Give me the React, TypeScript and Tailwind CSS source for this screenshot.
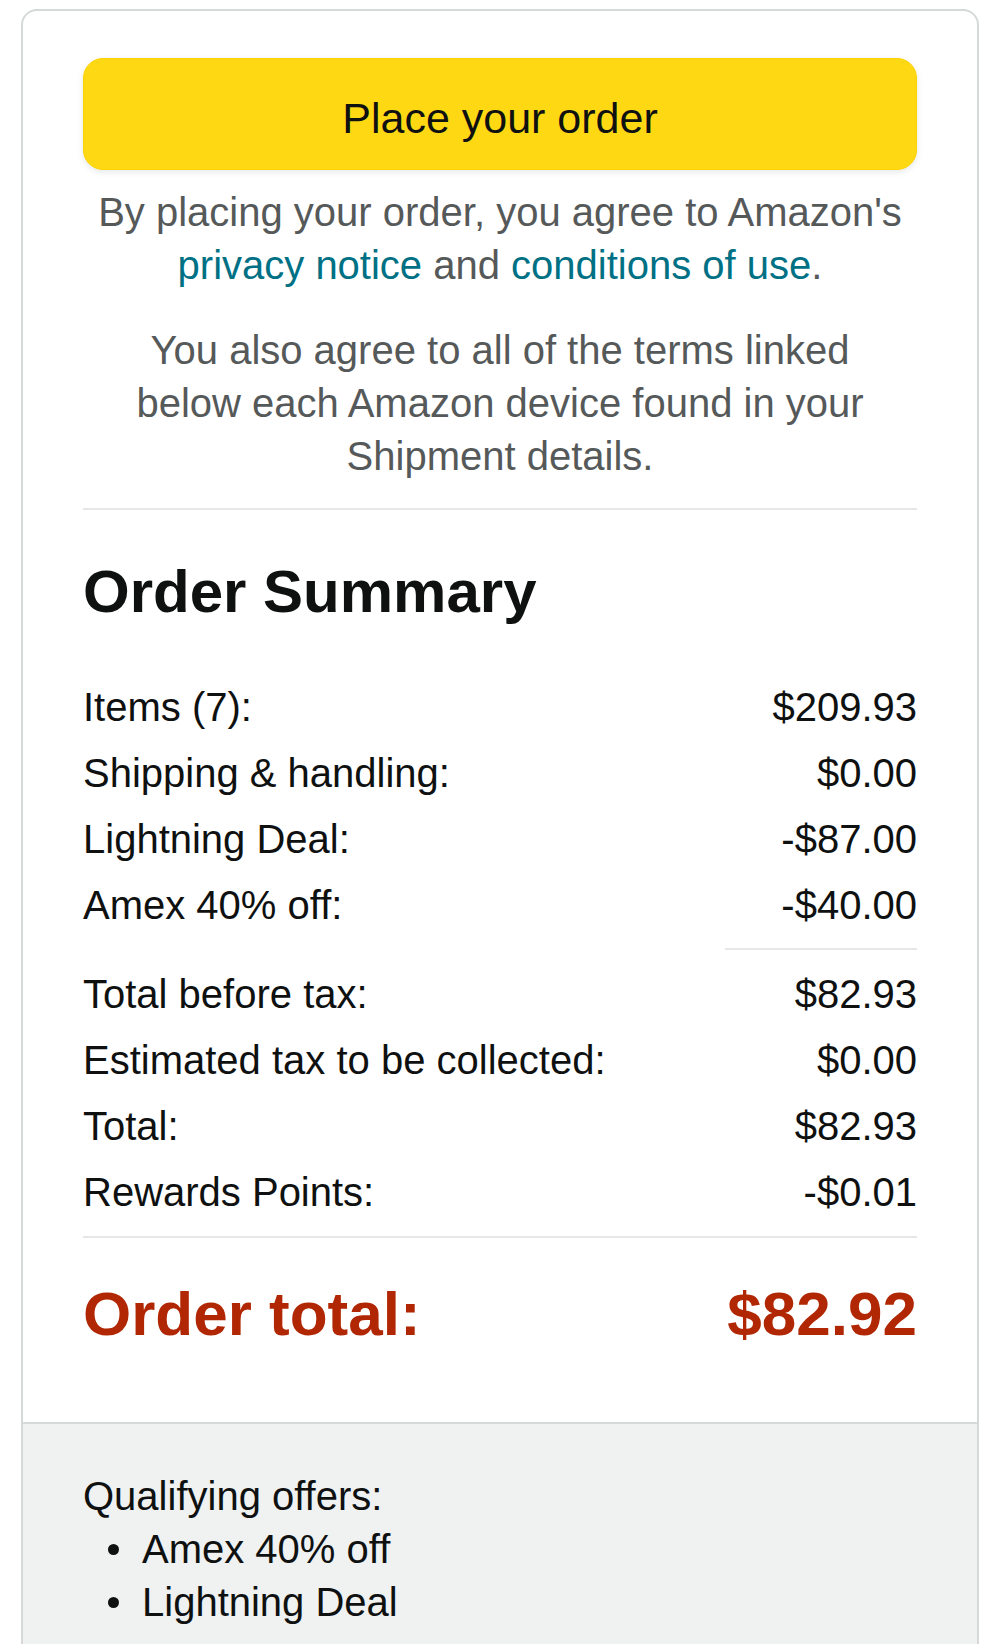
import React from "react";

const rowsA: [string, string][] = [
  ["Items (7):", "$209.93"],
  ["Shipping & handling:", "$0.00"],
  ["Lightning Deal:", "-$87.00"],
  ["Amex 40% off:", "-$40.00"],
];

const rowsB: [string, string][] = [
  ["Total before tax:", "$82.93"],
  ["Estimated tax to be collected:", "$0.00"],
  ["Total:", "$82.93"],
  ["Rewards Points:", "-$0.01"],
];

function Row({ label, value }: { label: string; value: string }) {
  return (
    <div className="flex h-[66px] items-center justify-between text-[40px] leading-none text-[#0F1111]">
      <span>{label}</span>
      <span>{value}</span>
    </div>
  );
}

export default function App() {
  return (
    <div className="h-[1644px] overflow-hidden bg-white font-['Liberation_Sans',Arial,sans-serif]">
      <div className="px-[21px] pt-[9px]">
        <div className="overflow-hidden rounded-[16px] border-2 border-[#D5D9D9]">
          <div className="px-[60px] pt-[47px] pb-[72px]">
            <button className="flex h-[112px] w-full items-center justify-center rounded-[20px] border border-[#FCD200] bg-[#FFD814] pt-[8px] text-[43px] leading-none text-[#0F1111] shadow-[0_2px_6px_0_rgba(213,217,217,0.6)]">
              Place your order
            </button>
            <p className="mt-[16px] text-center text-[40px] leading-[53px] text-[#565959]">
              By placing your order, you agree to Amazon's
              <br />
              <span className="text-[#007185]">privacy notice</span> and{" "}
              <span className="text-[#007185]">conditions of use</span>.
            </p>
            <p className="mt-[32px] text-center text-[40px] leading-[53px] text-[#565959]">
              You also agree to all of the terms linked
              <br />
              below each Amazon device found in your
              <br />
              Shipment details.
            </p>
            <div className="mt-[25px] h-[2px] bg-[#E7E7E7]" />
            <h2 className="mt-[46px] text-[60px] font-bold leading-[72px] text-[#0F1111]">
              Order Summary
            </h2>
            <div className="mt-[46px]">
              {rowsA.map(([l, v]) => (
                <Row key={l} label={l} value={v} />
              ))}
            </div>
            <div className="mt-[10px] mb-[11px] ml-auto h-[2px] w-[192px] bg-[#E7E7E7]" />
            <div>
              {rowsB.map(([l, v]) => (
                <Row key={l} label={l} value={v} />
              ))}
            </div>
            <div className="mt-[11px] h-[2px] bg-[#E7E7E7]" />
            <div className="mt-[40px] flex h-[72px] items-center justify-between text-[62px] font-bold leading-none text-[#B12704]">
              <span>Order total:</span>
              <span>$82.92</span>
            </div>
          </div>
          <div className="border-t-2 border-[#D5D9D9] bg-[#F0F2F2] px-[60px] pt-[46px] pb-[300px] text-[40px] leading-[53px] text-[#0F1111]">
            <div>Qualifying offers:</div>
            <div className="flex items-center">
              <span className="ml-[25px] mr-[23px] h-[11px] w-[11px] rounded-full bg-[#0F1111]" />
              <span>Amex 40% off</span>
            </div>
            <div className="flex items-center">
              <span className="ml-[25px] mr-[23px] h-[11px] w-[11px] rounded-full bg-[#0F1111]" />
              <span>Lightning Deal</span>
            </div>
          </div>
        </div>
      </div>
    </div>
  );
}
